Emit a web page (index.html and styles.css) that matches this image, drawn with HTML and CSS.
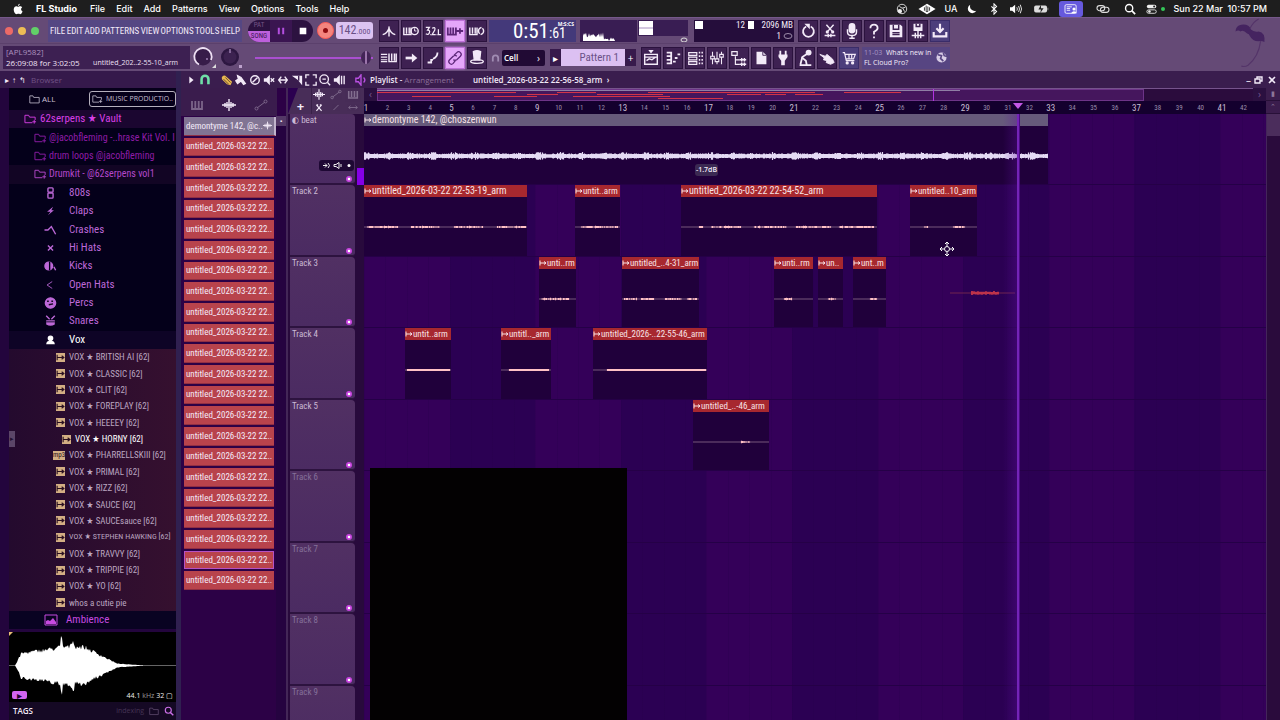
FILE: index.html
```html
<!DOCTYPE html>
<html lang="en">
<head>
<meta charset="utf-8">
<title>FL Studio</title>
<link rel="stylesheet" href="styles.css">
</head>
<body>
<svg class="sprite" aria-hidden="true">
  <symbol id="folder" viewBox="0 0 14 12"><path d="M1 2h4l1 2h7v7H1z" fill="none" stroke="currentColor"/></symbol>
  <symbol id="folder-add" viewBox="0 0 14 12"><path d="M9 10H1V2h4l1 2h6v3" fill="none" stroke="currentColor"/><path d="M9 9h4M11 7v4" stroke="currentColor"/></symbol>
  <symbol id="wave" viewBox="0 0 14 12"><path d="M0 6h14M3 4v4M5 3v6M7 0v12M9 3v6M11 4v4" stroke="currentColor" stroke-width="1.4"/></symbol>
  <symbol id="auto" viewBox="0 0 14 12"><path d="M3 9l8-6" stroke="currentColor"/><circle cx="2.500" cy="9.500" r="1.500" fill="none" stroke="currentColor"/><circle cx="11.500" cy="2.500" r="1.500" fill="none" stroke="currentColor"/></symbol>
  <symbol id="keys" viewBox="0 0 14 12"><path d="M2 2v8h10V2M5.300 2v7M8.700 2v7" fill="none" stroke="currentColor" stroke-width="1.8"/></symbol>
  <symbol id="clip" viewBox="0 0 8 8"><path d="M1 1.500v5M1 4h6M5 2.500L7 4 5 5.500" fill="none" stroke="currentColor"/></symbol>
  <symbol id="search" viewBox="0 0 14 14"><circle cx="6" cy="6" r="4.200" fill="none" stroke="currentColor" stroke-width="1.6"/><path d="M9 9l4 4" stroke="currentColor" stroke-width="2"/></symbol>
</svg>

<header class="menubar">
  <svg class="apple" viewBox="0 0 12 14"><path d="M8 1c0 1.500-1 2.500-2 2.500C6 2 7 1.200 8 1zM6 4.300c.8 0 1.300-.6 2.500-.6 1 0 1.900.5 2.400 1.300-2 1.300-1.600 4 .4 4.800-.6 1.600-1.700 3.200-2.800 3.200-.9 0-1.200-.5-2.200-.5s-1.400.5-2.200.5C2.700 13 1 10.400 1 7.700c0-2.600 1.600-3.900 3.100-3.900.8 0 1.400.5 1.900.5z" fill="#fff"/></svg>
  <strong>FL Studio</strong>
  <nav><a href="#">File</a><a href="#">Edit</a><a href="#">Add</a><a href="#">Patterns</a><a href="#">View</a><a href="#">Options</a><a href="#">Tools</a><a href="#">Help</a></nav>
  <div class="status">
    <svg viewBox="0 0 14 14"><circle cx="7" cy="7" r="5.500" fill="none" stroke="#eee"/><circle cx="4.500" cy="9.500" r="2.500" fill="#eee"/><path d="M4 4l3 2 4-1M8 6l2 4" stroke="#eee" fill="none"/></svg>
    <svg class="w20" viewBox="0 0 20 14"><path d="M0 7l10-6 10 6-10 6z" fill="#fff"/><path d="M7 5v4M9 3v7h2M11 4v6M13 5v4" stroke="#1e1e1e" fill="none"/></svg>
    <span>UA</span>
    <svg viewBox="0 0 14 14"><path d="M5 2a5.200 5.200 0 1 0 7 7A5.500 5.500 0 0 1 5 2z" fill="#fff"/></svg>
    <svg viewBox="0 0 14 14"><path d="M4 4l6 6-3 3V1l3 3-6 6" fill="none" stroke="#fff" stroke-width="1.200"/></svg>
    <svg viewBox="0 0 14 14"><path d="M0 5h2.500L6 2v10L2.500 9H0z" fill="#fff"/><path d="M8 5q1.200 2 0 4M10 3.500q2.200 3.500 0 7M12 2q3 5 0 10" fill="none" stroke="#fff"/></svg>
    <svg class="w20" viewBox="0 0 20 14"><rect x="2" y="3" width="15" height="8" rx="2" fill="#ddd"/><path d="M18 5.500v3" stroke="#999"/><path d="M10 2L7 7.500h3L9 12l4-6h-3z" fill="#222"/></svg>
    <span class="share"><svg class="w20" viewBox="0 0 20 14"><rect x="3" y="2" width="13" height="10" rx="1.500" fill="none" stroke="#fff"/><path d="M5 4.500h6M5 6.500h4M5 8.500h4" stroke="#fff"/><circle cx="13.500" cy="7" r="1.800" fill="#fff"/><path d="M10 12q3.500-5 7 0z" fill="#fff"/></svg></span>
    <svg class="w16" viewBox="0 0 16 14"><rect x="1" y="3" width="9" height="6" rx="3" fill="none" stroke="#ddd" stroke-width="1.300"/><rect x="5" y="5" width="10" height="6" rx="3" fill="none" stroke="#ddd" stroke-width="1.300"/></svg>
    <svg><use href="#search"/></svg>
    <svg viewBox="0 0 14 14"><rect x="1" y="2" width="11" height="4" rx="2" fill="#eee"/><rect x="1" y="8" width="11" height="4" rx="2" fill="none" stroke="#eee"/><circle cx="4" cy="10" r="1.500" fill="#eee"/><circle cx="9.500" cy="4" r="1.200" fill="#222"/></svg>
    <i class="dot"></i>
    <time>Sun 22 Mar&nbsp; 10:57 PM</time>
  </div>
</header>

<section class="toolbar">
  <div class="tb-left">
    <div class="row">
      <div class="lights"><i class="red"></i><i class="amber"></i><i class="green"></i></div>
      <nav class="appmenu"><a href="#">FILE</a><a href="#">EDIT</a><a href="#">ADD</a><a href="#">PATTERNS</a><a href="#">VIEW</a><a href="#">OPTIONS</a><a href="#">TOOLS</a><a href="#">HELP</a></nav>
      <div class="transport">
        <div class="mode"><button>PAT</button><button class="on">SONG</button></div>
        <button class="pause" aria-label="Pause"><svg viewBox="0 0 20 20"><path d="M8 7v6M12 7v6" stroke="#b44fe0" stroke-width="1.800"/></svg></button>
        <button class="stop" aria-label="Stop"><svg viewBox="0 0 20 20"><path d="M7 7h6v6H7z" fill="#fff"/></svg></button>
      </div>
      <button class="rec" aria-label="Record"><i></i></button>
      <div class="tempo">142<small>.000</small></div>
    </div>
    <div class="row">
      <div class="hint"><div>[APL9582]</div><div class="hintline"><b>26:09:08 for 3:02:05</b><span>untitled_202..2-55-10_arm</span></div></div>
      <svg class="knob" viewBox="0 0 24 24"><circle cx="11" cy="11" r="8.500" fill="#371c49"/><path d="M7 18.500A8.700 8.700 0 1 1 19 14" fill="none" stroke="#eee0f4" stroke-width="1.800"/><circle cx="15" cy="13" r="1" fill="#a080b5"/><path d="M20 22h4v-4z" fill="#ddd"/></svg>
      <svg class="knob" viewBox="0 0 24 24"><circle cx="12" cy="11" r="9" fill="#2d1741"/><circle cx="12" cy="11" r="6.500" fill="#3c2250"/><path d="M12 3v4" stroke="#c9aadd"/><path d="M21 19h3v3h-3z" fill="#bda2cc"/></svg>
      <input class="pitch" type="range" value="98" aria-label="Main pitch">
    </div>
  </div>
  <div class="tb-mid">
    <div class="row">
      <div class="btns" data-icons="metro wait count *keyplus loop"></div>
      <div class="clock">0:51<small>:61</small><span>M:S:CS</span></div>
      <svg class="scope" viewBox="0 0 57 22"><path id="spectrum" fill="#fff"/></svg>
      <svg class="meter" viewBox="0 0 50 22"><path d="M0 0h50v16H0z" fill="#391d53"/><path d="M1 1h14v14H1z" fill="#fff"/><path d="M1 8h14" stroke="#a890c0"/><ellipse cx="46" cy="20" rx="3" ry="2" fill="none" stroke="#ddd"/></svg>
      <div class="cpu"><i></i><span>12</span><em></em><span>2096 MB</span><span class="poly">1 <svg viewBox="0 0 10 8"><ellipse cx="5" cy="4" rx="4" ry="2.500" fill="none" stroke="#9b8aa8"/></svg></span></div>
      <div class="btns" data-icons="undo cut mic help save savenew ~dl"></div>
    </div>
    <div class="row">
      <div class="btns" data-icons="typing arrow slide *link hat"></div>
      <div class="snap"><svg class="magnet" viewBox="0 0 10 10"><path d="M2 9V5a3 3 0 0 1 6 0v4" fill="none" stroke="#a08cb2" stroke-width="2"/></svg>
        <select aria-label="Snap"><option>Cell</option></select><i>›</i></div>
      <div class="pattern"><button aria-label="Previous">▸</button><output>Pattern 1</output><button aria-label="Add pattern">+</button></div>
      <div class="btns" data-icons="plist proll rack mixer tree page plug tempo2 hand ~cart"></div>
      <div class="news"><p><span>11-03</span>&nbsp; What's new in<br>FL Cloud Pro?</p><svg viewBox="0 0 12 12"><circle cx="6" cy="6" r="5.500" fill="#d8cde6"/><path d="M2 3l4 1-1 3 3 3M8 1l1 3 3 1" stroke="#574583" stroke-width="1.800" fill="none"/></svg></div>
    </div>
  </div>
  <svg class="fruit" viewBox="0 0 40 54"><path d="M5 14q0-6 6-7 8-1 10 5 3 3 8 2 7 1 6 11-2-1-4-1-8 1-11-5-1-3-3-3-4-4-7-2-2-2-5 0z" fill="#452460"/><path d="M20 11q3-7 9-10M31 24q-2 16-13 25-3 2-7 1" stroke="#543469" stroke-width="1.200" fill="none"/></svg>
</section>

<main class="workspace">
  <aside class="browser">
    <div class="bar"><i>▸</i><i>↑</i><i>↰</i><span>Browser</span></div>
    <div class="tabs"><button><svg><use href="#folder"/></svg>ALL</button><button class="sel"><svg><use href="#folder-add"/></svg>MUSIC PRODUCTIO..</button></div>
    <ul class="folders" id="folders"></ul>
    <ul class="files" id="files"></ul>
    <div class="ambience"><svg viewBox="0 0 14 12"><path d="M1 1h12v10H1z" fill="none" stroke="currentColor"/><path d="M2 10V7l2-1 2 1 3-3 3 4v2z" fill="currentColor"/></svg>Ambience</div>
    <div class="preview">
      <svg viewBox="0 0 167 68" preserveAspectRatio="none"><path d="M0 33.500h167" stroke="#aaa" stroke-width=".6"/><path id="sample" fill="#fff"/><path d="M0 0h4l-4 4z" fill="#e8bd75"/></svg>
      <button aria-label="Play">▸</button>
      <p>44.1 <span>kHz</span> 32 ▢</p>
    </div>
    <div class="tags"><b>TAGS</b><span>indexing</span><svg><use href="#folder"/></svg><svg class="find"><use href="#search"/></svg></div>
    <i class="grip">▸</i>
  </aside>

  <section class="playlist">
    <div class="bar pl-title">
      <div class="tools" id="tools"></div>
      <h1>Playlist - <span>Arrangement</span></h1><h2>untitled_2026-03-22 22-56-58_arm &nbsp;<i>›</i></h2>
      <div class="win"><button aria-label="Minimise">–</button><button aria-label="Restore"><svg viewBox="0 0 10 10"><path d="M1 4h5v4H1zM3 4V2h5v4H6" fill="none" stroke="currentColor" stroke-width="1.400"/></svg></button><button aria-label="Close"><svg viewBox="0 0 10 10"><path d="M2 2l6 6M8 2L2 8" stroke="currentColor" stroke-width="1.600"/></svg></button></div>
    </div>
    <div class="pl-body">
      <div class="picker">
        <div class="filters"><svg class="dim"><use href="#keys"/></svg><svg><use href="#wave"/></svg><svg class="dim"><use href="#auto"/></svg></div>
        <div class="pickwrap"><ul id="clips"></ul><i class="scroll">▪</i></div>
      </div>
      <div class="arrange">
        <div class="corner"><b>+</b><div><svg><use href="#wave"/></svg><svg class="dim"><use href="#auto"/></svg><svg class="dim"><use href="#keys"/></svg><svg viewBox="0 0 14 12"><path d="M4 3l6 7M10 3L4 10M4 3h2M8 3h2" stroke="currentColor" stroke-width="1.400"/></svg><svg class="dim" viewBox="0 0 14 12"><path d="M4 9l6-6" stroke="currentColor"/></svg><svg class="dim" viewBox="0 0 14 12"><path d="M2 6h10M4 4L2 6l2 2M10 4l2 2-2 2" stroke="currentColor" fill="none"/></svg></div></div>
        <div class="top">
          <div class="mini"><i>‹</i><div class="map" id="map"></div><i>›</i></div>
          <div class="ruler" id="ruler"></div>
        </div>
        <div class="corner-end"><i>▮</i><i>⌃</i></div>
        <div class="heads" id="heads"></div>
        <div class="lanes" id="lanes"></div>
        <div class="vscroll"><i></i></div>
      </div>
    </div>
  </section>
</main>
<script src="app.js"></script>
</body>
</html>
```
FILE: styles.css
```css
:root { --cond: "Roboto Condensed", "Liberation Sans Narrow", "DejaVu Sans Condensed", sans-serif; }
* { box-sizing: border-box; }
html, body { height: 100%; margin: 0; }
body { display: flex; flex-direction: column; overflow: hidden; background: #2b0050; color: #f3eaf8; font-family: "Open Sans", "Noto Sans", sans-serif; font-size: 10px; line-height: 12px; }
ul, p, h1, h2 { margin: 0; padding: 0; list-style: none; }
a { color: inherit; text-decoration: none; }
i, em { font-style: normal; }
button { margin: 0; padding: 0; border: 0; background: none; color: inherit; font: inherit; }
svg { display: block; flex: none; width: 14px; height: 12px; }
.sprite { position: absolute; width: 0; height: 0; }
.bar { display: flex; align-items: center; flex: none; height: 17px; background: #3a1d4e; }

.menubar { display: flex; align-items: center; flex: none; height: 17px; background: #1e1e1e; color: #fff; font: 500 9px/16px Inter, "Open Sans", sans-serif; }
.apple { margin: 0 12px; width: 12px; height: 12px; }
.menubar strong { width: 54px; font-weight: 700; white-space: nowrap; }
.menubar nav { display: flex; gap: 11px; }
.status { display: flex; align-items: center; gap: 8px; margin-left: auto; padding-right: 13px; }
.status svg { width: 14px; height: 12px; }
.status .w20 { width: 20px; }
.status .w16 { width: 16px; }
.share { padding: 2px; border-radius: 3px; background: #6659dd; }
.dot { width: 4px; height: 4px; margin-left: -6px; border-radius: 50%; background: #34c759; }
.share + svg { margin-right: 4px; margin-left: 4px; }

.toolbar { display: flex; flex: none; height: 54px; background: #654a76; border-top: 1px solid #75588a; }
.tb-left { width: 377px; flex: none; }
.row { display: flex; align-items: center; height: 27px; }
.row:first-child { height: 26px; border-bottom: 1px solid #5b406c; }
.lights { display: flex; gap: 5px; width: 48px; padding-left: 5px; }
.lights i { width: 8px; height: 8px; border-radius: 50%; }
.red { background: #ec6a67; } .amber { background: #edbd55; } .green { background: #62d068; }
.appmenu { display: flex; align-items: center; justify-content: space-between; width: 194px; height: 22px; padding: 0 2px; background: #554783; font-family: var(--cond); font-size: 9px; }
.transport { display: flex; width: 65px; height: 22px; margin-left: 6px; overflow: hidden; border-radius: 11px; background: #2c1240; }
.mode { display: flex; flex-direction: column; width: 22px; font: 7px/11px var(--cond); color: #745384; }
.mode button { width: 22px; }
.mode .on { background: #bd60dc; color: #3a1550; }
.transport svg { width: 22px; height: 22px; }
.pause { background: #3a1551; }
.rec { display: grid; place-items: center; width: 17px; height: 17px; margin-left: 4px; border-radius: 50%; background: #f4857f; border: 1px solid #ff5a55; }
.rec i { width: 5px; height: 5px; border-radius: 50%; background: #8e0b10; }
.tempo { width: 37px; height: 17px; margin-left: 2px; border-radius: 3px; background: #dcc3f2; color: #6b5187; text-align: center; font: 12px/17px var(--cond); }
.tempo small { font-size: 8px; }
.hint { width: 187px; height: 23px; margin-left: 3px; padding: 0 3px; background: #3d2052; font-size: 8px; line-height: 11px; color: #ac92be; white-space: nowrap; }
.hintline { display: flex; justify-content: space-between; color: #eee0f5; }
.hint b { font-weight: 400; }
.hint span { margin-right: 9px; font-size: 7px; }
.knob { width: 24px; height: 24px; margin-left: 2px; }
.pitch { appearance: none; width: 118px; height: 14px; margin: 0 0 0 13px; background: linear-gradient(#a94fd0, #a94fd0) center / 100% 2px no-repeat; }
.pitch::-webkit-slider-thumb { appearance: none; width: 10px; height: 13px; border-radius: 50%; background: linear-gradient(90deg, #432457 40%, #9b75ab 40% 60%, #432457 60%); }
.tb-mid { flex: none; }
.btns { display: flex; gap: 2px; margin-left: 2px; }
.btns button { display: grid; place-items: center; width: 20px; height: 22px; border: 1px solid #2b123e; background: #3e2152; }
.btns button.on { background: #e5a6fa; color: #5c2678; border-color: #bd70d8; box-shadow: 0 0 2px #d682f2; }
.btns button.blue { background: #4c3e7c; border-color: #3a2c69; }
.btns svg { width: 18px; height: 18px; }
.clock { position: relative; display: flex; align-items: baseline; justify-content: flex-end; width: 87px; height: 22px; margin-left: 2px; padding-right: 10px; background: #44397a; color: #fff; font: 21px/23px var(--cond); }
.clock small { font-size: 14px; }
.clock span { position: absolute; top: 1px; right: 2px; font: 700 5px/6px "Open Sans", sans-serif; }
.scope { width: 57px; height: 22px; margin-left: 4px; background: #391d53; }
.meter { width: 50px; height: 22px; margin-left: 1px; }
.cpu { display: grid; grid-template-columns: 8px 1fr 6px 36px; gap: 0 3px; align-items: center; width: 100px; height: 22px; margin: 0 2px 0 6px; padding: 0 1px; background: #250d3b; font: 9px/11px var(--cond); text-align: right; white-space: nowrap; }
.cpu > i, .cpu > em { height: 8px; background: #fff; }
.cpu .poly { display: flex; align-items: center; justify-content: flex-end; gap: 2px; height: 10px; grid-column: 2 / 5; }
.poly svg { width: 10px; height: 8px; }
.snap { position: relative; display: flex; align-items: center; width: 54px; margin-left: 4px; }
.magnet { width: 9px; height: 10px; margin-right: 2px; }
.snap select { appearance: none; width: 43px; height: 16px; padding: 0 2px; border: 0; border-radius: 2px; background: #210a34; color: #fff; font: 600 8px/16px "Open Sans", sans-serif; }
.snap i { position: absolute; right: 5px; }
.pattern { display: flex; align-items: center; height: 17px; margin-left: 5px; }
.pattern button { width: 11px; height: 17px; background: #371a4c; color: #fff; }
.pattern output { width: 64px; padding-right: 6px; background: #dcc0f2; color: #6b5187; text-align: right; font: 11px/17px var(--cond); }
.pattern + .btns { margin-left: 5px; }
.news { display: flex; align-items: center; justify-content: space-between; width: 88px; height: 22px; margin-left: 3px; padding: 0 3px 0 2px; background: #574582; font-size: 7px; line-height: 10px; white-space: nowrap; }
.news span { color: #a694c4; }
.news svg { width: 11px; height: 11px; }
.fruit { width: 40px; height: 52px; margin: 0 10px 0 auto; }

.workspace { display: flex; flex: 1; min-height: 0; }
.browser { position: relative; display: flex; flex-direction: column; flex: none; width: 181px; padding-left: 9px; border-right: 5px solid #302050; background: #23053d; }
.browser .bar { margin-left: -9px; padding-left: 5px; gap: 3px; background: #35194b; font-size: 8px; }
.browser .bar span { margin-left: 2px; color: #705285; }
.tabs { display: flex; align-items: center; justify-content: space-between; height: 22px; padding-left: 20px; background: #06001a; color: #c6bfd0; font-size: 8px; }
.tabs button { display: flex; align-items: center; gap: 2px; height: 16px; white-space: nowrap; }
.tabs .sel { width: 87px; justify-content: center; gap: 3px; border: 1px solid #b5b0bd; border-radius: 3px; font-size: 7px; }
.tabs svg { width: 11px; height: 10px; }
.folders { display: flex; flex-direction: column; height: 239px; color: #bd68d8; background: #04001a; font-family: var(--cond); font-size: 11px; }
.folders li { display: flex; align-items: center; flex: 1; min-height: 0; padding-left: 35px; gap: 12px; overflow: hidden; white-space: nowrap; }
.folders li.root { padding-left: 15px; gap: 3px; background: #1b0630; color: #d63fe4; }
.folders li.mid { padding-left: 25px; gap: 2px; color: #8f1ca7; font-size: 10px; }
.folders li.drum { background: #120524; color: #b548cc; }
.folders li.vox { background: #0e0426; color: #fff; }
.folders svg { width: 13px; height: 12px; }
.files { display: flex; flex-direction: column; height: 262px; background: linear-gradient(90deg, #240a2e, #35102f); color: #bba6c0; font-family: var(--cond); font-size: 9px; }
.files li { display: flex; align-items: center; flex: 1; min-height: 0; gap: 4px; padding-left: 47px; white-space: nowrap; }
.files li.play { padding-left: 53px; color: #fff; }
.files li.long { font-size: 8px; }
.files svg { width: 9px; height: 9px; background: #d3ae83; color: #2b1020; }
.files em { width: 12px; margin-left: -3px; background: #d3ae83; color: #2b1020; font-size: 7px; line-height: 9px; text-align: center; }
.ambience { display: flex; align-items: center; gap: 8px; height: 18px; padding-left: 35px; background: #090322; color: #c64ae0; font-family: var(--cond); font-size: 11px; }
.preview { position: relative; height: 70px; margin-top: 3px; background: #000; }
.preview svg { width: 100%; height: 68px; }
.preview button { position: absolute; left: 3px; bottom: 3px; width: 15px; height: 8px; border-radius: 2px; background: #d264f0; color: #200030; line-height: 8px; }
.preview p { position: absolute; right: 3px; bottom: 0; font-size: 7px; color: #eee; }
.preview span { color: #999; }
.tags { display: flex; align-items: center; gap: 5px; flex: 1; padding: 0 2px 0 4px; background: #150924; font-size: 8px; }
.tags b { font-weight: 600; }
.tags span { margin-left: auto; color: #453455; font-size: 7px; }
.tags svg { width: 10px; height: 10px; color: #655075; }
.tags .find { color: #cc70e8; }
.grip { position: absolute; left: 9px; top: 360px; width: 6px; height: 16px; background: #5b4668; font-size: 7px; line-height: 16px; text-align: center; color: #231030; }

.playlist { display: flex; flex-direction: column; flex: 1; min-width: 0; }
.pl-title { padding-left: 4px; }
.tools { display: flex; gap: 2px; width: 185px; }
.tools svg { width: 12px; height: 12px; }
.tools .tint { margin-left: 8px; color: #b850e0; }
.tools .first { margin-right: 8px; }
.pl-title h1, .pl-title h2 { font-size: 8px; font-weight: 600; white-space: nowrap; }
.pl-title h1 { width: 103px; }
.pl-title h1 span { color: #8c7099; font-weight: 400; }
.win { display: flex; gap: 3px; margin-left: auto; padding-right: 3px; }
.win svg { width: 10px; height: 10px; }
.pl-body { display: flex; flex: 1; min-height: 0; }
.picker { display: flex; flex-direction: column; width: 107px; flex: none; background: #2c0146; border-right: 2px solid #432757; }
.filters { display: flex; align-items: center; justify-content: space-between; height: 28px; padding: 5px 9px 0; background: #3a1c4d; margin-right: 9px; }
.dim { opacity: .35; }
.pickwrap { display: flex; flex: 1; }
.pickwrap ul { display: flex; flex-direction: column; width: 93px; height: 475px; padding-left: 3px; }
.pickwrap li { flex: 1; min-height: 0; padding: 1px 0; display: flex; }
.pickwrap li span { display: flex; align-items: center; justify-content: space-between; flex: 1; padding: 0 2px; background: #b8434c; border-bottom: 1px solid #902f43; font-family: var(--cond); font-size: 9px; white-space: nowrap; }
.pickwrap li.grey span { background: #817493; border-right: 2px solid #c0b3cc; }
.pickwrap li.cur span { padding: 0 1px; border: 1px solid #b552c3; }
.pickwrap li svg { width: 9px; height: 9px; }
.scroll { flex: 1; margin-left: 2px; font-size: 6px; line-height: 10px; text-align: center; background: linear-gradient(#533866 10px, #250340 10px); }

.arrange { display: grid; grid-template-columns: 76px minmax(0, 1fr) 14px; grid-template-rows: 26px minmax(0, 1fr); flex: 1; min-width: 0; }
.corner { display: flex; background: #482d58; clip-path: polygon(10px 0, 100% 0, 100% 100%, 0 100%); }
.corner b { width: 24px; padding: 12px 0 0 2px; font-size: 13px; text-align: center; border-right: 1px solid #392048; }
.corner div { display: grid; grid-template-columns: repeat(3, 14px); gap: 2px 3px; padding-left: 1px; align-content: center; }
.corner svg { width: 12px; height: 11px; }
.top { background: #14002e; }
.mini { display: flex; height: 13px; background: #2a0c3c; }
.mini > i { width: 13px; text-align: center; color: #75568c; background: #2b1040; }
.map { position: relative; flex: 1; background: linear-gradient(90deg, #45165d 87.5%, #2b0c3d 87.5%); border-top: 1px solid #76538c; }
.map i { position: absolute; height: 1px; background: #d23448; }
.map .frame { top: 0; left: 0; width: 87.5%; height: 12px; border: 1px solid #6d3488; background: none; }
.map .song { height: 1px; top: 1px; background: #8f7fa5; }
.map .now { width: 1px; height: 12px; top: 0; background: #b135e0; }
.ruler { position: relative; height: 13px; overflow: hidden; }
.ruler span { position: absolute; width: 20px; margin-left: -8px; text-align: center; font: 7px/15px var(--cond); color: #9a8caa; }
.ruler span.major { font-size: 9px; color: #c8bdd2; }
.ruler i { position: absolute; top: 2px; margin-left: -5px; border: 5px solid transparent; border-top: 6px solid #c557e6; }
.corner-end { display: flex; flex-direction: column; background: #3b1d4d; color: #8d7699; text-align: center; font-size: 7px; }
.corner-end i { height: 13px; border-bottom: 1px solid #281038; }
.heads { position: relative; overflow: hidden; background: #280a3c; padding-right: 9px; padding-left: 2px; }
.head { position: relative; padding: 0 2px; border-bottom: 2px solid #2d133f; border-radius: 0 4px 4px 0; background: linear-gradient(#513063, #4b2b62); color: #cbb9d4; font: 9px/13px var(--cond); }
.stack { display: flex; flex-direction: column; height: 643px; }
.stack > * { flex: 1; min-height: 0; }
.head.off { color: #85709a; }
.head::after { content: ""; position: absolute; right: 3px; bottom: 1px; width: 6px; height: 6px; border-radius: 50%; background: radial-gradient(#fff 20%, #c742df 40%); }
.head .mute { position: absolute; right: 1px; bottom: 12px; width: 35px; height: 11px; border-radius: 3px; background: #1e0834; color: #eee; }
.mute svg { width: 35px; height: 11px; }
.level { position: absolute; right: 0; top: 54px; width: 7px; height: 17px; background: #8600e6; }
.lanes { position: relative; overflow: hidden; background: repeating-linear-gradient(90deg, #340059 0 9.49%, #2b0053 9.49% 18.98%); }
.lane { position: relative; border-bottom: 1px solid #250047; background: repeating-linear-gradient(90deg, #25004a40 0 1px, transparent 1px 2.373%); }
.clip { position: absolute; top: 0; bottom: 0; background: #20003b; overflow: hidden; }
.clip header { display: flex; align-items: center; height: 12px; background: #a7282f; color: #f7e2e6; font: 10px/12px var(--cond); white-space: nowrap; }
.clip header svg { width: 8px; height: 8px; }
.clip .wave { position: absolute; left: 0; top: 35px; width: 100%; height: 14px; }
.clip.narrow header { font-size: 9px; }
.clip.song header { background: #665a7b; }
.playhead { position: absolute; top: 0; bottom: 0; width: 17px; margin-left: -15px; background: linear-gradient(90deg, transparent, #5e10a050 80%, #7424b8 84%, #7424b8 92%, #4a0c82 94%); }
.ghost { position: absolute; top: 172px; height: 14px; }
.video { position: absolute; top: 354px; bottom: 0; background: #030102; }
.db { position: absolute; top: 50px; width: 23px; height: 12px; border-radius: 3px; background: #3b2952; text-align: center; font-size: 7px; font-weight: 600; }
.cursor { position: absolute; top: 127px; width: 16px; height: 16px; }
.vscroll { background: #2a0b3c; border-left: 1px solid #44255a; }
.vscroll i { display: block; height: 22px; background: #4b2d5c; }
```
FILE: app.js
```js
const $ = id => document.getElementById(id);
const svg = (body, box = 20, cls = '') => `<svg class="${cls}" viewBox="0 0 ${box} ${box}" fill="none" stroke="currentColor" stroke-width="1.6">${body}</svg>`;

const icons = {
  metro: '<path d="M3 14q5-1 7-7 2 6 7 7M10 5v11"/>',
  wait: '<path d="M2 6v8h8V6M5 6v7M8 6v7"/><circle cx="14" cy="10" r="4"/><path d="M14 7v3h2" stroke-width="1"/>',
  count: '<path d="M2 6h4l-2 3q3 0 2 3-1 3-4 1M9 7q4-2 3 2l-3 5h4M16 8v6h3" stroke-width="1.400"/><path d="M7 14h1M14 14h1"/>',
  keyplus: '<path d="M2 6v8h9V6M5 6v7M8 6v7M12 10h7M15.500 7v6" stroke-width="2"/>',
  loop: '<path d="M2 6v8h8V6M5 6v7M8 6v7M13 13a4 4 0 0 1 0-6l2-1M16 7a4 4 0 0 1 0 6l-2 1"/>',
  undo: '<path d="M8 5a6 6 0 1 0 5 0" stroke-width="2"/><path d="M6 2h6v6z" fill="currentColor" stroke="none"/>',
  cut: '<path d="M6 3l7 8M14 3l-7 8M4 15h12M8 13v4M11 13v4"/><circle cx="7" cy="11" r="1"/><circle cx="13" cy="11" r="1"/>',
  mic: '<rect x="7" y="2" width="6" height="10" rx="3" fill="currentColor"/><path d="M5 8v3q0 4 5 4 5 0 5-4V8M10 15v3M7 18h6"/>',
  help: '<path d="M6 7q0-4 4-4t4 4q0 2-4 4v3M10 16v2" stroke-width="2"/>',
  save: '<path d="M3 3h12l2 2v12H3z" fill="currentColor" stroke="none"/><path d="M7 3v5h6V3M6 12h8M6 14h8" stroke="#3e2152"/>',
  savenew: '<path d="M5 2h10v8H5z" fill="currentColor" stroke="none"/><path d="M8 2v3h4V2" stroke="#3e2152"/><path d="M3 15h14M7 12v6M10 10v8M13 12v6"/>',
  dl: '<path d="M10 2v8M6 7l4 4 4-4" stroke-width="2.400"/><path d="M3 11v5h14v-5" stroke-width="2.400"/>',
  typing: '<path d="M1 6h7M1 9h7M1 12h7M1 14h7" stroke-width="1.200"/><path d="M10 5v9h8V5M13 5v8M16 5v8"/>',
  arrow: '<path d="M4 10h9" stroke-width="3"/><path d="M11 5l6 5-6 5z" fill="currentColor" stroke="none"/>',
  slide: '<path d="M4 15h4v-3h2M10 11q5-2 5-7" stroke-width="2"/>',
  link: '<path d="M9 7l3-3q2-2 4 0t0 4l-4 4q-2 1-4 0M11 12l-3 4q-2 2-4 0t0-4l4-4q2-2 4 0" stroke-width="1.400"/>',
  hat: '<path d="M6 3q4-2 8 0l-1 9H7z" fill="currentColor"/><ellipse cx="10" cy="14" rx="7" ry="2"/>',
  plist: '<path d="M3 6h14v11H3zM5 13l3-2 3 1 4-3M3 9h14"/><path d="M7 1h6l-3 4z" fill="currentColor" stroke="none"/>',
  proll: '<path d="M3 4h5v12H3M3 8h4M3 12h4M10 14h3M12 10h3M15 6h3" stroke-width="2"/>',
  rack: '<path d="M3 4h9v3H3zM3 9h9v3H3zM3 14h9v3H3z" stroke-width="1.300"/><path d="M15 3v14M18 3v14" stroke-dasharray="2 2"/>',
  mixer: '<path d="M5 3v14M10 3v14M15 3v14" stroke-width="1.200"/><path d="M3 8h4v3H3zM8 11h4v3H8zM13 6h4v3h-4z" fill="#3e2152" stroke-width="1.200"/>',
  tree: '<path d="M2 3h6v4H2zM6 8v9h5M6 12h5" stroke-width="1.300"/><path d="M11 12h7M11 17h7M13 10v4M16 10v4M13 15v4M16 15v4"/>',
  page: '<path d="M5 3h7l4 4v10H5z" fill="currentColor" stroke="none"/><path d="M12 3v4h4" stroke="#3e2152" stroke-width="1"/>',
  plug: '<path d="M5 6h10v3l-3 4v5H8v-5L5 9z" fill="currentColor" stroke="none"/><path d="M7 2v5M13 2v5" stroke-width="2"/>',
  tempo2: '<path d="M4 18h13M6 9l5 4 1 5M5 17l2-8 6-4" stroke-width="2"/><circle cx="14" cy="4" r="2.500" fill="currentColor"/>',
  hand: '<path d="M2 6l6 2 2-2 6 5 2 4-4 2-5-2 1-2-4-1 1-2z" fill="currentColor" stroke-width="1"/>',
  cart: '<path d="M3 4h2l2 9h9M6 6h11l-2 5H7M10 6v5M13 6v5" stroke-width="1.300"/><circle cx="8" cy="15.500" r="1" fill="currentColor"/><circle cx="14" cy="15.500" r="1" fill="currentColor"/>'
};
document.querySelectorAll('[data-icons]').forEach(box => {
  box.innerHTML = box.dataset.icons.split(' ').map(n => {
    const cls = n[0] === '*' ? 'on' : n[0] === '~' ? 'blue' : '';
    const key = n.replace(/^[*~]/, '');
    return `<button class="${cls}" aria-label="${key}">${svg(icons[key])}</button>`;
  }).join('');
});

$('tools').innerHTML = [
  ['<path d="M5 3l5 4-5 4z" fill="currentColor" stroke="none"/>', ''],
  ['<path d="M3 12V6a4 4 0 0 1 8 0v6" stroke="#6fe0a8" stroke-width="3"/>', 'first'],
  ['<path d="M1 4q1-3 4-2l8 7-2 4-4-1-6-6z" fill="#e8b94f" stroke="none"/><path d="M3 6l6 6M5 4l6 6" stroke="#5b3a2a" stroke-width="1"/>', ''],
  ['<path d="M3 2l4 2 5 7-2 1-3-4-4 3-2-3 3-2z" fill="currentColor"/>', ''],
  ['<circle cx="7" cy="7" r="5"/><path d="M4 10l6-6"/>', ''],
  ['<path d="M1 5h3l4-4v12L4 9H1z" fill="currentColor" stroke="none"/><path d="M9 5l4 4M13 5L9 9"/>', ''],
  ['<path d="M2 7h10M5 3L2 7l3 4M9 3l3 4-3 4"/>', ''],
  ['<path d="M1 2h12v11L8 7z" fill="currentColor" stroke="none"/><path d="M9 2v6" stroke="#3a1d4e"/>', ''],
  ['<path d="M1 5V1h4M9 1h4v4M13 9v4H9M5 13H1V9"/>', ''],
  ['<circle cx="6" cy="6" r="5"/><path d="M10 10l3 3M4 6h4"/>', ''],
  ['<path d="M1 5h3l4-4v12L4 9H1z" fill="currentColor" stroke="none"/><path d="M10 2v10M13 2v10"/>', ''],
  ['<path d="M1 5h3l3-4v12L4 9H1zM10 4q3 3 0 6"/>', 'tint']
].map(([b, c]) => svg(b, 14, c)).join('');

const use = id => `<svg><use href="#${id}"/></svg>`;
const kit = [
  ['808s', '<rect x="4" y="1" width="6" height="5" rx="1"/><rect x="4" y="7" width="6" height="6" rx="1"/>'],
  ['Claps', '<path d="M10 2L3 8h4l-3 4 7-6H8z" fill="currentColor" stroke="none"/>'],
  ['Crashes', '<path d="M0 7h4l4-4 5 9"/>'],
  ['Hi Hats', '<path d="M4 4l6 6M10 4l-6 6"/>'],
  ['Kicks', '<circle cx="5" cy="7" r="4.500" fill="currentColor"/><path d="M6 2v10" stroke="#04001a"/><path d="M11 8l2 4"/>'],
  ['Open Hats', '<path d="M3 7l6-4M3 7l6 4" stroke-width="1"/>'],
  ['Percs', '<circle cx="7" cy="7" r="6" fill="currentColor"/><path d="M3 5h2M8 5h2M5 9l5-1" stroke="#150820"/>'],
  ['Snares', '<path d="M2 1l4 4M12 1L8 5"/><path d="M2 6h10v5q-5 3-10 0z" fill="currentColor" stroke="none"/><path d="M2 8h10" stroke="#04001a" stroke-width="1"/>'],
  ['Vox', '<circle cx="7" cy="5" r="2.500" fill="currentColor"/><path d="M2 12q0-4 5-4t5 4z" fill="currentColor" stroke="none"/>']
];
$('folders').innerHTML =
  `<li class="root">${use('folder-add')}62serpens ★ Vault</li>` +
  `<li class="mid">${use('folder-add')}@jacobfleming -..hrase Kit Vol. I</li>` +
  `<li class="mid">${use('folder-add')}drum loops @jacobfleming</li>` +
  `<li class="mid drum">${use('folder-add')}Drumkit - @62serpens vol1</li>` +
  kit.map(([n, b]) => `<li class="${n === 'Vox' ? 'vox' : ''}">${svg(b, 14)}${n}</li>`).join('');

$('files').innerHTML = ['BRITISH AI', 'CLASSIC', 'CLIT', 'FOREPLAY', 'HEEEEY', 'HORNY', 'PHARRELLSKIII', 'PRIMAL', 'RIZZ', 'SAUCE', 'SAUCEsauce', 'STEPHEN HAWKING', 'TRAVVY', 'TRIPPIE', 'YO']
  .map(n => `<li class="${n === 'HORNY' ? 'play' : n.length > 14 ? 'long' : ''}">${n === 'PHARRELLSKIII' ? '<em>mp3</em>' : use('clip')}VOX ★ ${n} [62]</li>`).join('') +
  `<li>${use('clip')}whos a cutie pie</li>`;

$('clips').innerHTML = `<li class="grey"><span>demontyme 142, @c..${use('wave')}</span></li>` +
  Array.from({ length: 22 }, (_, i) => `<li class="${i === 20 ? 'cur' : ''}"><span>untitled_2026-03-22 22..</span></li>`).join('');

/* Positions are on a 902-unit timeline; one bar is 21.4 units. */
const SPAN = 902, BAR = 21.4;
const pct = v => (v / SPAN * 100).toFixed(3) + '%';
let seed = 7;
const rnd = () => (seed = (seed * 16807) % 2147483647) / 2147483647;

$('ruler').innerHTML = Array.from({ length: 42 }, (_, i) =>
  `<span class="${i % 4 ? '' : 'major'}" style="left:${pct(i * BAR)}">${i + 1}</span>`).join('') + `<i style="left:${pct(654)}"></i>`;

const tracks = ['beat', 'Track 2', 'Track 3', 'Track 4', 'Track 5', 'Track 6', 'Track 7', 'Track 8', 'Track 9'];
const mute = '<span class="mute"><svg viewBox="0 0 35 11" fill="none" stroke="#eee"><path d="M4 5.500h4M6 3.500l2 2-2 2M9 3q3 2.500 0 5M15 4.500h2l3-2v6l-3-2h-2zM22 4v3"/><circle cx="30" cy="5.500" r="1.500" fill="#fff" stroke="none"/></svg></span>';
$('heads').innerHTML = '<div class="stack">' + tracks.map((t, i) =>
  `<div class="head ${i > 4 ? 'off' : ''}">${i ? t : '◐ beat' + mute}</div>`).join('') + '</div><i class="level"></i>';

const clips = [
  [0, 0, 684, 'demontyme 142, @choszenwun', [[0, 684]]],
  [1, 0, 163, 'untitled_2026-03-22 22-53-19_arm', [[3, 34], [47, 76], [90, 119], [133, 162]]],
  [1, 211, 256, 'untit..arm', [[6, 43]]],
  [1, 317, 513, 'untitled_2026-03-22 22-54-52_arm', [[18, 22], [30, 60], [73, 106], [115, 150], [158, 193]]],
  [1, 546, 613, 'untitled..10_arm', [[14, 18], [43, 55]]],
  [2, 175, 212, 'unti..rm', [[2, 30]]],
  [2, 258, 335, 'untitled_..4-31_arm', [[2, 15], [19, 32], [43, 60], [65, 75]]],
  [2, 410, 449, 'unti..rm', [[10, 18]]],
  [2, 454, 479, 'un..', [[10, 18]]],
  [2, 489, 522, 'unt..m', [[17, 24]]],
  [3, 41, 87, 'untit..arm', [[2, 45]]],
  [3, 137, 187, 'untitl.._arm', [[8, 48]]],
  [3, 229, 343, 'untitled_2026-..22-55-46_arm', [[14, 113]]],
  [4, 329, 405, 'untitled_..-46_arm', [[48, 57]]]
];
const waveform = (w, parts, song, solid) => {
  let d = '';
  for (const [a, b] of parts) for (let x = a; x < b; x++) {
    const beat = (x % 21.4) < 7;
    const h = song ? 1.7 + rnd() * (beat ? 2.2 : 0.8) : solid ? 1.1 : 0.3 + rnd() * 0.9;
    d += `M${x + 0.5} ${(7 - h).toFixed(1)}V${(7 + h).toFixed(1)}`;
  }
  return `<svg class="wave" viewBox="0 0 ${w} 14" preserveAspectRatio="none"><path d="M0 7h${w}" stroke="#77577c"/><path d="${d}" stroke="${song ? '#e4daf4' : '#ffc1c5'}" stroke-width="1.200"/></svg>`;
};
const lane = i => '<div class="lane">' + clips.filter(c => c[0] === i).map(([t, a, b, name, parts]) =>
  `<article class="clip ${t ? '' : 'song'} ${b - a < 160 ? 'narrow' : ''}" style="left:${pct(a)};width:${pct(b - a)}"><header>${use('clip')}${name}</header>${waveform(b - a, parts, !t, t === 3)}</article>`).join('') + '</div>';
let ghost = '';
for (let x = 22; x < 50; x += 2) ghost += `M${x} ${5 + rnd()}V${8 + rnd()}`;
$('lanes').innerHTML = '<div class="stack">' + tracks.map((_, i) => lane(i)).join('') + '</div>' +
  `<svg class="ghost" style="left:${pct(586)};width:${pct(65)}" viewBox="0 0 65 14" preserveAspectRatio="none"><path d="M0 7h65" stroke="#70254f"/><path d="${ghost}" stroke="#e34048" stroke-width="1.500"/></svg>` +
  `<div class="playhead" style="left:${pct(654)}"></div>` +
  `<div class="db" style="left:${pct(331)}">-1.7dB</div>` +
  `<div class="video" style="left:${pct(6)};width:${pct(257)}"></div>` +
  `<svg class="cursor" style="left:${pct(575)}" viewBox="0 0 16 16"><g fill="none" stroke="#fff"><circle cx="8" cy="8" r="2.500"/><path d="M8 1v4M8 11v4M1 8h4M11 8h4M6 3l2-2 2 2M6 13l2 2 2-2M3 6L1 8l2 2M13 6l2 2-2 2"/></g></svg>`;

/* Overview strip: every clip drawn as a line on the row of its track. */
$('map').innerHTML = '<i class="frame"></i>' +
  `<i class="song" style="left:0;width:66.500%"></i>` +
  clips.filter(c => c[0]).map(([t, a, b]) => `<i style="top:${t * 2 + 1}px;left:${(a / 10.250).toFixed(2)}%;width:${((b - a) / 10.250).toFixed(2)}%"></i>`).join('') +
  `<i class="now" style="left:63.500%"></i>`;

let s = 'M3 21';
for (let x = 3; x < 36; x++) s += `L${x} ${(21 - (x < 24 ? 3 + rnd() * 6 : rnd() * 4)).toFixed(1)}`;
$('spectrum').setAttribute('d', s + 'V21Z');

const env = x => x < 6 ? 0 : x < 12 ? (x - 6) * 2 : x < 50 ? 13 + (x - 12) * 0.16 : x < 75 ? 20 : x < 108 ? 20 - (x - 75) * 0.54 : x < 135 ? 2 - (x - 108) * 0.07 : 0;
let up = 'M5 33.500', down = '';
for (let x = 5; x < 135; x++) {
  const peak = x === 52 || x === 53 ? 9 : x > 61 && x < 66 ? 5 : 0;
  const e = Math.max(0, env(x));
  up += `L${x} ${(33.5 - e * (0.8 + rnd() * 0.25) - peak).toFixed(1)}`;
  down = `L${x} ${(33.5 + e * (0.8 + rnd() * 0.25) + peak).toFixed(1)}` + down;
}
$('sample').setAttribute('d', up + down + 'Z');
```
